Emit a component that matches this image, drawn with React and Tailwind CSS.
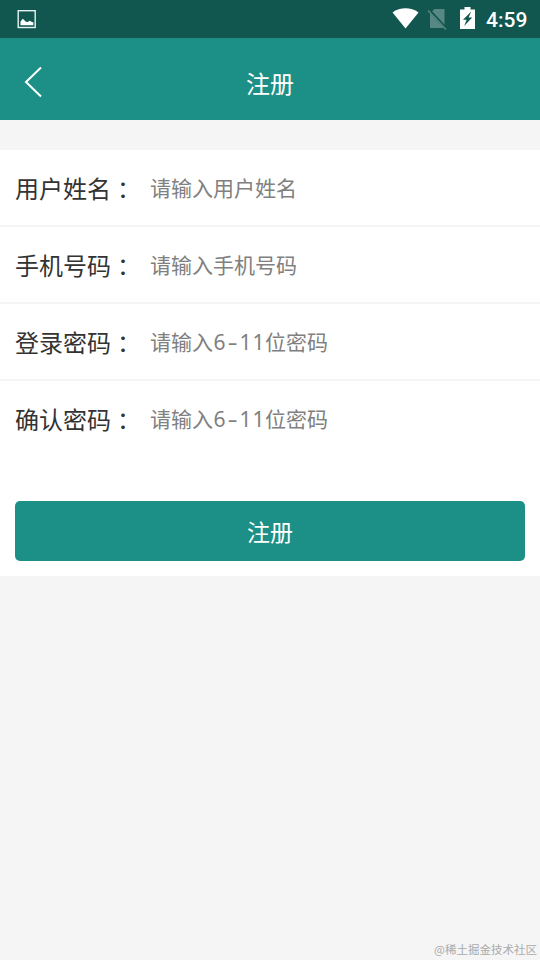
const fields = [
  { label: '用户姓名', hint: '请输入用户姓名' },
  { label: '手机号码', hint: '请输入手机号码' },
  { label: '登录密码', hint: '请输入', range: '6-11', rest: '位密码' },
  { label: '确认密码', hint: '请输入', range: '6-11', rest: '位密码' },
];

function StatusBar() {
  return (
    <div className="flex h-[38px] items-center bg-[#11564f] pl-[17px] pr-3 text-white">
      <svg className="h-5 w-5" viewBox="0 0 20 20">
        <rect x="1.2" y="1.7" width="17" height="16.8" fill="none" stroke="#e4f3f2" strokeWidth="1.4" />
        <path d="M3.5 16.3V12.5L5.8 9.8L7.2 11L8.8 12.7L10.5 13L12.7 11.8L14.5 12.7L16.4 13.5V16.3Z" fill="#fff" />
      </svg>
      <div className="ml-auto flex items-center">
        <svg className="h-[22px] w-[27px]" viewBox="0 0 27 22">
          <path d="M.5 4.5C8 -1.1 19 -1.1 26.5 4.5L13.5 20.5Z" fill="#fff" />
        </svg>
        <svg className="ml-2 h-[22px] w-5" viewBox="0 0 20 22">
          <path d="M7.5 1H17.5V20H3V5.3Z" fill="#588883" />
          <path d="M2 2L20 21.5" stroke="#11564f" strokeWidth="3" />
          <path d="M1 2.5L19 21.5" stroke="#588883" strokeWidth="1.5" />
        </svg>
        <svg className="mb-[2px] ml-[13px] h-[22px] w-[15px]" viewBox="0 0 15 22">
          <path d="M0 2.5H4.5V0H10.5V2.5H15V22H0Z" fill="#fff" />
          <path d="M11.2 4.5L3 12.8H6.6L4.2 19L12.2 10.5H8.6Z" fill="#11564f" />
        </svg>
        <span className="ml-[11px] w-[42px] whitespace-nowrap pt-[2px] font-['Roboto',sans-serif] text-[21px] font-medium leading-6">4:59</span>
      </div>
    </div>
  );
}

function Field({ label, hint, range, rest }) {
  return (
    <label className="flex h-[77px] items-center border-b-2 border-[#f5f5f5] px-[15px] last:h-[75px] last:border-b-0">
      <span className="flex w-[135px] whitespace-nowrap text-2xl leading-9 text-[#333]">
        {label}
        <span className="translate-y-px font-['Noto_Sans_CJK_TC',sans-serif]">：</span>
      </span>
      <span className="mb-[2px] flex h-8 whitespace-nowrap text-[21px] leading-8 text-[#808080]">
        {hint}
        {range && (
          <span className="flex pt-px font-['Noto_Sans',sans-serif]">
            {range.split('').map((char, i) => (
              <span key={i} className={char === '-' ? 'w-[13px] scale-x-150 text-center' : 'w-[13px] text-center'}>{char}</span>
            ))}
          </span>
        )}
        {rest}
      </span>
    </label>
  );
}

export default function App() {
  return (
    <div className="flex h-[960px] w-[540px] flex-col overflow-hidden bg-[#f5f5f5] font-['Noto_Sans_CJK_SC',sans-serif]">
      <StatusBar />
      <header className="grid h-[82px] grid-cols-[80px_1fr_80px] items-center bg-[#1c9086] text-white">
        <svg className="ml-6 mt-[5px] h-8 w-[18px]" viewBox="0 0 18 32" fill="none" stroke="#fff" strokeWidth="2">
          <path d="M17 1.5L2 16L17 30.5" />
        </svg>
        <h1 className="pt-[7px] text-center text-2xl leading-9">注册</h1>
      </header>
      <main className="mt-[30px] h-[426px] bg-white">
        <div>
          {fields.map((field) => (
            <Field key={field.label} {...field} />
          ))}
        </div>
        <div className="px-[15px] pt-[45px]">
          <button className="h-[60px] w-full rounded-[5px] bg-[#1c9086] text-[23px] text-white">注册</button>
        </div>
      </main>
      <footer className="mt-auto pb-[3px] pr-[3px] text-right text-[11.5px] leading-4 text-[#aaa]">@稀土掘金技术社区</footer>
    </div>
  );
}
